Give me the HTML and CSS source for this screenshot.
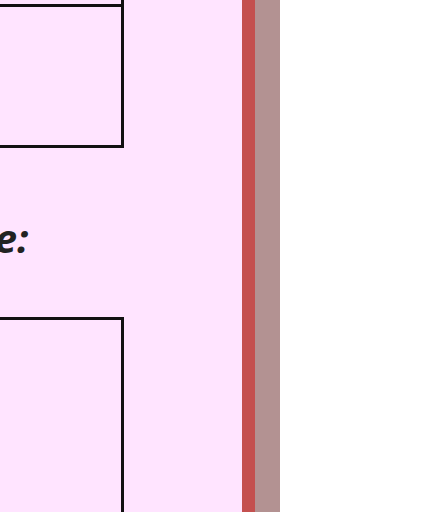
FILE: index.html
```html
<!DOCTYPE html>
<html>
<head>
<meta charset="utf-8">
<link rel="stylesheet" href="styles.css">
</head>
<body>
<div class="page">
  <main class="column">
    <div class="content">
      <div class="box box-first"></div>
      <div class="box box-second"></div>
      <h2 class="heading">Example code:</h2>
      <div class="box box-third"></div>
    </div>
  </main>
  <div class="edge"></div>
  <div class="shade"></div>
</div>
</body>
</html>
```
FILE: styles.css
```css
html, body {
  margin: 0;
  padding: 0;
  background: #ffffff;
  height: 512px;
  overflow: hidden;
}
.page {
  display: flex;
  height: 512px;
}
.column {
  width: 242px;
  background: #ffe4ff;
  overflow: hidden;
}
.edge {
  width: 13px;
  background: #c4504f;
}
.shade {
  width: 25px;
  background: #b39292;
}
.content {
  margin-left: -200px;
  width: 324px;
  display: flex;
  flex-direction: column;
}
.box {
  box-sizing: border-box;
  border: 3px solid #111111;
  background: #ffe4ff;
}
.box-first {
  height: 200px;
  margin-top: -193px;
}
.box-second {
  border-top: none;
  height: 141px;
}
.heading {
  margin: 0 0 0 -43px;
  padding-top: 66px;
  font-family: "Open Sans", sans-serif;
  font-weight: 700;
  font-style: italic;
  font-size: 40px;
  line-height: 48px;
  color: #222222;
  white-space: nowrap;
}
.box-third {
  margin-top: 55px;
  height: 300px;
}
```
